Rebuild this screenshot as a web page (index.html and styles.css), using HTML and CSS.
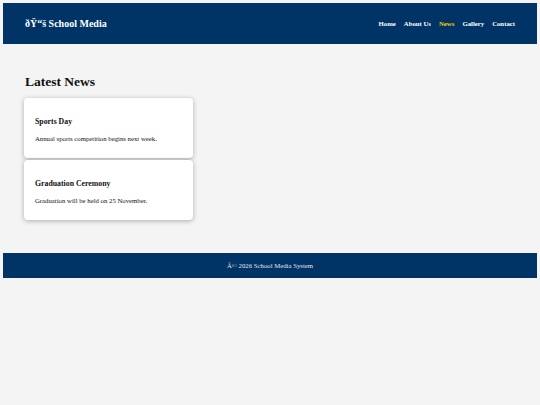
FILE: index.html
```html
<!DOCTYPE html>
<html lang="en">
<head>
<meta charset="utf-8">
<title>School Media - News</title>
<link rel="stylesheet" href="styles.css">
</head>
<body>
<header class="site-header">
  <div class="logo">ðŸ“š School Media</div>
  <nav class="nav">
    <a href="#" class="nav-link">Home</a>
    <a href="#" class="nav-link">About Us</a>
    <a href="#" class="nav-link active">News</a>
    <a href="#" class="nav-link">Gallery</a>
    <a href="#" class="nav-link">Contact</a>
  </nav>
</header>
<main class="content">
  <h2 class="page-title">Latest News</h2>
  <div class="news-list">
    <article class="card">
      <h3 class="card-title">Sports Day</h3>
      <p class="card-text">Annual sports competition begins next week.</p>
    </article>
    <article class="card">
      <h3 class="card-title">Graduation Ceremony</h3>
      <p class="card-text">Graduation will be held on 25 November.</p>
    </article>
  </div>
</main>
<footer class="site-footer">Â© 2026 School Media System</footer>
</body>
</html>
```
FILE: styles.css
```css
html, body {
  background: #f4f4f4;
}
body {
  margin: 3px;
  font-family: "Liberation Serif", "Times New Roman", serif;
  color: #111;
}
.site-header {
  background: #003366;
  color: #fff;
  height: 41px;
  padding: 0 22px;
  display: flex;
  align-items: center;
  justify-content: space-between;
}
.logo {
  font-size: 10px;
  font-weight: bold;
}
.nav {
  display: flex;
  gap: 8px;
}
.nav-link {
  color: #fff;
  text-decoration: none;
  font-weight: bold;
  font-size: 6.75px;
}
.nav-link.active {
  color: #ffcc00;
}
.content {
  padding: 30px 21px 33px;
}
.page-title {
  font-size: 13.5px;
  margin: 0 0 8px 1px;
}
.news-list {
  display: flex;
  flex-direction: column;
  gap: 2px;
}
.card {
  width: 169px;
  height: 60px;
  box-sizing: border-box;
  background: #fff;
  border-radius: 4px;
  box-shadow: 0 1px 5px rgba(0, 0, 0, 0.3);
  padding: 11px;
}
.card-title {
  font-size: 7.8px;
  margin: 8px 0 9px;
}
.card-text {
  font-size: 6.75px;
  margin: 0;
}
.site-footer {
  background: #003366;
  color: #e6e6e6;
  height: 25px;
  display: flex;
  align-items: center;
  justify-content: center;
  font-size: 6.75px;
}
```
